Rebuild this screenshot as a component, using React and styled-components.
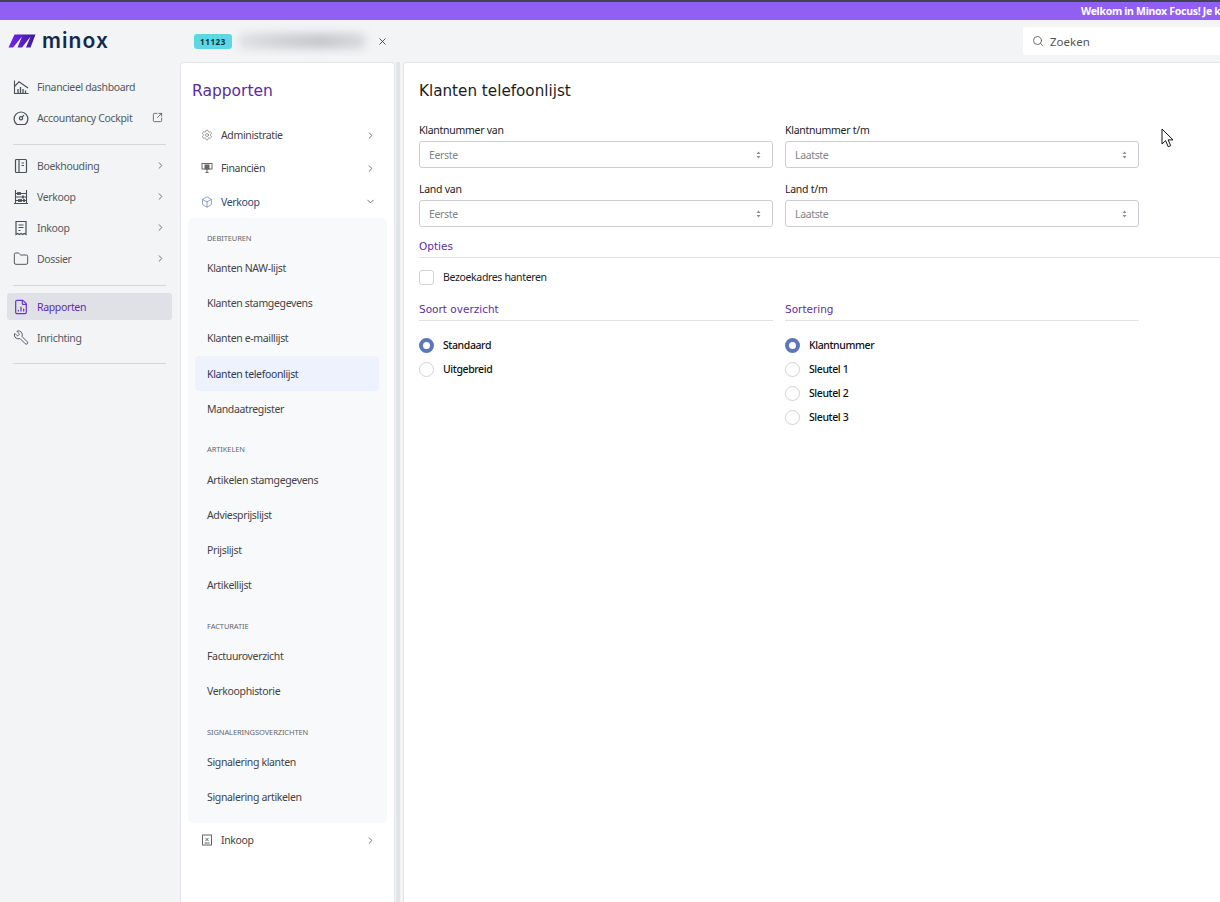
import React from "react";
import styled, { createGlobalStyle } from "styled-components";
import {
  Box,
  ChevronDown,
  ChevronRight,
  FileChartColumn,
  Folder,
  Search,
  Settings,
  SquareArrowOutUpRight,
  Wrench,
  X,
} from "lucide-react";

const GlobalStyle = createGlobalStyle`
  html, body {
    margin: 0;
    padding: 0;
    height: 100%;
    overflow: hidden;
    background: #f2f4f6;
  }
  #root { height: 100%; }
  * { box-sizing: border-box; }
  body {
    font-family: "Noto Sans", "Open Sans", sans-serif;
    color: #333;
  }
`;

const Page = styled.div`
  position: relative;
  display: flex;
  flex-direction: column;
  height: 902px;
  overflow: hidden;
`;

const Banner = styled.div`
  height: 20px;
  flex: none;
  border-top: 2px solid #45414f;
  background: #9160f2;
  color: #fff;
  font-size: 10.5px;
  font-weight: 700;
  letter-spacing: -0.3px;
  line-height: 18px;
  padding-left: 1081px;
  white-space: nowrap;
  overflow: hidden;
`;

const Header = styled.header`
  height: 42px;
  flex: none;
  display: flex;
  align-items: center;
  overflow: hidden;
`;

const LogoWrap = styled.div`
  width: 194px;
  flex: none;
  display: flex;
  align-items: center;
  gap: 6px;
  padding-left: 8px;
`;

const LogoText = styled.span`
  font-family: Inter, sans-serif;
  font-size: 21px;
  font-weight: 600;
  letter-spacing: 1.1px;
  color: #14294f;
  line-height: 24px;
`;

const Badge = styled.span`
  width: 38px;
  height: 15px;
  flex: none;
  border-radius: 3px;
  background: #5dd6e6;
  color: #12303a;
  font-size: 8px;
  font-weight: 700;
  letter-spacing: 0.6px;
  line-height: 15px;
  text-align: center;
`;

const BlurredName = styled.div`
  width: 128px;
  height: 16px;
  margin: 0 11px 0 6px;
  border-radius: 7px;
  background: linear-gradient(90deg, #e0e2e4, #d2d3d6 30%, #c6c8cb 65%, #d9dadd);
  filter: blur(4px);
`;

const CloseBtn = styled.span`
  display: flex;
  color: #333;
`;

const SearchBox = styled.div`
  margin-left: auto;
  width: 197px;
  height: 28px;
  flex: none;
  display: flex;
  align-items: center;
  gap: 6px;
  padding-left: 9px;
  background: #fff;
  border-radius: 3px 0 0 3px;
  font-size: 11.5px;
  color: #555;
`;

const Body = styled.div`
  flex: 1;
  display: flex;
  min-height: 0;
  letter-spacing: -0.35px;
`;

const Sidebar = styled.nav`
  width: 180px;
  flex: none;
  display: flex;
  flex-direction: column;
  padding: 9px 8px 0 7px;
`;

const SideItem = styled.div`
  height: ${(p) => (p.$active ? "27px" : "31px")};
  margin: ${(p) => (p.$active ? "2px 0" : "0")};
  flex: none;
  display: flex;
  align-items: center;
  padding: 0 6px 0 6px;
  border-radius: 3px;
  font-size: 10.5px;
  color: ${(p) => (p.$active ? "#5b2bb5" : "#555a60")};
  background: ${(p) => (p.$active ? "#dfe1e6" : "transparent")};
`;

const SideIcon = styled.span`
  width: 16px;
  height: 16px;
  flex: none;
  display: flex;
  align-items: center;
  justify-content: center;
  margin-right: 8px;
  color: ${(p) => (p.$active ? "#6a35c9" : "#4a4f55")};
  transform: ${(p) => (p.$flip ? "scaleX(-1)" : "none")};
`;

const SideLabel = styled.span`
  flex: 1;
  white-space: nowrap;
`;

const SideDivider = styled.hr`
  height: 1px;
  flex: none;
  border: 0;
  margin: 11px 6px 5px;
  background: #d3d6da;

  &:last-child {
    margin-top: 10px;
  }
`;

const Arrow = styled.span`
  display: flex;
  color: #666;
  margin-right: ${(p) => p.$shift || 0}px;
`;

const Panel = styled.aside`
  width: 215px;
  flex: none;
  background: #fff;
  border: 1px solid #e3e5e8;
  border-bottom: 0;
  border-radius: 4px 4px 0 0;
  padding: 0 7px 0 7px;
`;

const PanelTitle = styled.h2`
  margin: 0;
  padding: 18px 0 0 4px;
  height: 56px;
  font-family: "DejaVu Sans", sans-serif;
  font-size: 15.5px;
  font-weight: 400;
  letter-spacing: 0;
  line-height: 20px;
  color: #5b2a9d;
`;

const PanelRow = styled.div`
  height: ${(p) => p.$h || 33}px;
  display: flex;
  align-items: center;
  padding: 0 11px 0 13px;
  font-size: 10.5px;
  color: ${(p) => (p.$open ? "#33476e" : "#444")};
`;

const PanelIcon = styled.span`
  width: 13px;
  display: flex;
  margin-right: 7px;
  color: ${(p) => (p.$open ? "#5a6f9c" : "#666")};
`;

const PanelLabel = styled.span`
  flex: 1;
`;

const SubBox = styled.div`
  height: 605px;
  background: #f8f9fb;
  border-radius: 5px;
  padding: 10px 8px 0 7px;
`;

const SubHeading = styled.div`
  height: 20px;
  margin: ${(p) => p.$mt || 0}px 0 2.5px;
  padding-left: 12px;
  font-size: 7.5px;
  letter-spacing: -0.1px;
  line-height: 20px;
  text-transform: uppercase;
  color: #666;
`;

const SubItem = styled.div`
  height: 35.2px;
  display: flex;
  align-items: center;
  padding-left: 12px;
  border-radius: 4px;
  font-size: 10.5px;
  color: ${(p) => (p.$active ? "#2d3a5c" : "#444")};
  background: ${(p) => (p.$active ? "#eef2fc" : "transparent")};
`;

const Splitter = styled.div`
  width: 8px;
  flex: none;
  background: linear-gradient(90deg, #f2f4f6 0 1px, #e2e5e8 1px 5px, #f2f4f6 5px);
`;

const Main = styled.main`
  flex: 1;
  min-width: 0;
  background: #fff;
  border: 1px solid #e3e5e8;
  border-right: 0;
  border-bottom: 0;
  border-radius: 4px 0 0 0;
  padding: 18px 0 0 15px;
  overflow: hidden;
`;

const Title = styled.h1`
  margin: 0 0 23px;
  font-family: "DejaVu Sans", sans-serif;
  font-size: 15.2px;
  font-weight: 400;
  letter-spacing: 0;
  line-height: 20px;
  color: #1c1c1c;
`;

const FieldGrid = styled.div`
  display: grid;
  grid-template-columns: 354px 354px;
  column-gap: 12px;
  row-gap: 15px;
`;

const Field = styled.div`
  display: flex;
  flex-direction: column;
`;

const FieldLabel = styled.label`
  font-size: 10.5px;
  letter-spacing: -0.27px;
  line-height: 12px;
  height: 17px;
  color: #222;
`;

const Select = styled.div`
  height: 27px;
  display: flex;
  align-items: center;
  justify-content: space-between;
  padding: 0 11px 0 9px;
  border: 1px solid #c9ccd1;
  border-radius: 3px;
  font-size: 10.5px;
  color: #808488;
`;

const SectionTitle = styled.h3`
  margin: 0;
  height: 19px;
  font-family: "DejaVu Sans", sans-serif;
  font-size: 10.5px;
  font-weight: 400;
  letter-spacing: 0;
  line-height: 14px;
  color: #5f2f9f;
  border-bottom: 1px solid #dfe1e5;
`;

const Options = styled.div`
  margin-top: ${(p) => p.$mt || 0}px;
`;

const CheckRow = styled.label`
  height: 15px;
  display: flex;
  align-items: center;
  gap: 9px;
  font-size: 10.5px;
  color: #222;
`;

const CheckText = styled.span`
  padding-bottom: 2px;
`;

const CheckBox = styled.span`
  width: 15px;
  height: 15px;
  flex: none;
  border: 1px solid #cfd2d6;
  border-radius: 3px;
  background: #fff;
`;

const RadioRow = styled.label`
  height: 24px;
  display: flex;
  align-items: center;
  gap: 9px;
  font-size: 10.5px;
  font-weight: 500;
  letter-spacing: -0.4px;
  color: #111;
`;

const RadioDot = styled.span`
  width: 15px;
  height: 15px;
  flex: none;
  border-radius: 50%;
  background: #fff;
  border: ${(p) => (p.$on ? "4.5px solid #5b76bd" : "1px solid #cfd2d6")};
`;

const Pointer = styled.svg`
  position: absolute;
  left: 1161px;
  top: 128px;
`;

const LogoMark = () => (
  <svg width="28" height="14" viewBox="0 0 28 14">
    <defs>
      <linearGradient id="logoGrad" x1="0" x2="28" y1="0" y2="0" gradientUnits="userSpaceOnUse">
        <stop offset="0" stopColor="#7a22f0" />
        <stop offset="1" stopColor="#3a1a96" />
      </linearGradient>
    </defs>
    <path
      d="M0.5 13.5 6.5 0.5H27.5L22.5 13.5H18L22.6 2.5 14 13.5H9.5L14 2.5 5 13.5Z"
      fill="url(#logoGrad)"
    />
  </svg>
);

const DashIcon = () => (
  <svg width="16" height="16" viewBox="0 0 16 16" fill="none" stroke="currentColor" strokeWidth="1.1">
    <path d="M1.5 1.5v13h14" />
    <path d="M1.5 7.5 6 2.8l9 6.2" />
    <path d="M5 14v-4M7.5 14V8M10 14v-4M12.5 14v-2.5" strokeWidth="1.3" />
  </svg>
);

const CockpitIcon = () => (
  <svg width="16" height="16" viewBox="0 0 16 16" fill="none" stroke="currentColor" strokeWidth="1.2">
    <path d="M4 14.5h8a6.9 6.9 0 1 0-8 0Z" />
    <circle cx="8" cy="8.2" r="1.6" />
    <path d="m9 7.2 2-2" />
  </svg>
);

const BookIcon = () => (
  <svg width="16" height="16" viewBox="0 0 16 16" fill="none" stroke="currentColor" strokeWidth="1.2">
    <rect x="2.5" y="1.5" width="11" height="13" rx="1" />
    <path d="M6 1.5v13M8.5 5H11M8.5 7.5H11" />
  </svg>
);

const AbacusIcon = () => (
  <svg width="16" height="16" viewBox="0 0 16 16" fill="none" stroke="currentColor" strokeWidth="1.1">
    <path d="M2.5 1v13M13.5 1v13M1 14.5h14M2.5 4.5h11M2.5 8h11M2.5 11.5h11" />
    <path d="M5 3v3M7 3v3M10 6.5v3M6 10v3M8 10v3M11 10v3" strokeWidth="1.7" />
  </svg>
);

const ReceiptIcon = () => (
  <svg width="16" height="16" viewBox="0 0 16 16" fill="none" stroke="currentColor" strokeWidth="1.2">
    <path d="M3 1.5h10v13l-1.7-1-1.6 1-1.7-1-1.7 1-1.6-1-1.7 1Z" />
    <path d="M5.5 5h5M5.5 7.5h5M5.5 10.5h2" />
  </svg>
);

const TrophyIcon = () => (
  <svg width="12" height="12" viewBox="0 0 12 12" fill="none" stroke="currentColor" strokeWidth="1">
    <rect x="1" y="1.5" width="10" height="5.5" />
    <path d="M6 7v3.5M4.5 10.5h3" />
    <rect x="4" y="3" width="4" height="4" fill="currentColor" />
  </svg>
);

const InvoiceIcon = () => (
  <svg width="12" height="12" viewBox="0 0 12 12" fill="none" stroke="currentColor" strokeWidth="1">
    <rect x="1.5" y="1" width="9" height="10" />
    <path d="m4.5 4 3 3M7.5 4l-3 3M3.5 9h5" />
  </svg>
);

const SelectCarets = () => (
  <svg width="5" height="8" viewBox="0 0 5 8" fill="#8a8d91">
    <path d="M2.5 0.5 4.5 3H0.5ZM2.5 7.5 0.5 5h4Z" />
  </svg>
);

const sideGroups = [
  [
    { label: "Financieel dashboard", icon: <DashIcon /> },
    { label: "Accountancy Cockpit", icon: <CockpitIcon />, external: true },
  ],
  [
    { label: "Boekhouding", icon: <BookIcon />, arrow: true },
    { label: "Verkoop", icon: <AbacusIcon />, arrow: true },
    { label: "Inkoop", icon: <ReceiptIcon />, arrow: true },
    { label: "Dossier", icon: <Folder size={16} strokeWidth={1.4} />, arrow: true },
  ],
  [
    { label: "Rapporten", icon: <FileChartColumn size={16} strokeWidth={1.8} />, active: true },
    { label: "Inrichting", icon: <Wrench size={17} strokeWidth={1.4} />, flip: true },
  ],
];

const reportGroups = [
  { title: "Debiteuren", items: ["Klanten NAW-lijst", "Klanten stamgegevens", "Klanten e-maillijst", "Klanten telefoonlijst", "Mandaatregister"] },
  { title: "Artikelen", mt: 13, items: ["Artikelen stamgegevens", "Adviesprijslijst", "Prijslijst", "Artikellijst"] },
  { title: "Facturatie", mt: 13, items: ["Factuuroverzicht", "Verkoophistorie"] },
  { title: "Signaleringsoverzichten", mt: 13, items: ["Signalering klanten", "Signalering artikelen"] },
];

const fields = [
  { label: "Klantnummer van", value: "Eerste" },
  { label: "Klantnummer t/m", value: "Laatste" },
  { label: "Land van", value: "Eerste" },
  { label: "Land t/m", value: "Laatste" },
];

const radioGroups = [
  { title: "Soort overzicht", options: ["Standaard", "Uitgebreid"] },
  { title: "Sortering", options: ["Klantnummer", "Sleutel 1", "Sleutel 2", "Sleutel 3"] },
];

export default function App() {
  return (
    <Page>
      <GlobalStyle />
      <Banner>Welkom in Minox Focus! Je k</Banner>
      <Header>
        <LogoWrap>
          <LogoMark />
          <LogoText>minox</LogoText>
        </LogoWrap>
        <Badge>11123</Badge>
        <BlurredName />
        <CloseBtn>
          <X size={11} strokeWidth={1.8} />
        </CloseBtn>
        <SearchBox>
          <Search size={12} strokeWidth={1.7} />
          Zoeken
        </SearchBox>
      </Header>
      <Body>
        <Sidebar>
          {sideGroups.map((group, i) => (
            <React.Fragment key={i}>
              {group.map((item) => (
                <SideItem key={item.label} $active={item.active}>
                  <SideIcon $active={item.active} $flip={item.flip}>{item.icon}</SideIcon>
                  <SideLabel>{item.label}</SideLabel>
                  {item.arrow && (
                    <Arrow>
                      <ChevronRight size={11} />
                    </Arrow>
                  )}
                  {item.external && (
                    <Arrow $shift={3}>
                      <SquareArrowOutUpRight size={11} />
                    </Arrow>
                  )}
                </SideItem>
              ))}
              <SideDivider />
            </React.Fragment>
          ))}
        </Sidebar>
        <Panel>
          <PanelTitle>Rapporten</PanelTitle>
          <PanelRow $h={32}>
            <PanelIcon>
              <Settings size={12} strokeWidth={1.2} />
            </PanelIcon>
            <PanelLabel>Administratie</PanelLabel>
            <Arrow>
              <ChevronRight size={11} />
            </Arrow>
          </PanelRow>
          <PanelRow $h={34}>
            <PanelIcon>
              <TrophyIcon />
            </PanelIcon>
            <PanelLabel>Financiën</PanelLabel>
            <Arrow>
              <ChevronRight size={11} />
            </Arrow>
          </PanelRow>
          <PanelRow $h={33} $open>
            <PanelIcon $open>
              <Box size={12} strokeWidth={1.3} />
            </PanelIcon>
            <PanelLabel>Verkoop</PanelLabel>
            <Arrow>
              <ChevronDown size={11} />
            </Arrow>
          </PanelRow>
          <SubBox>
            {reportGroups.map((group) => (
              <React.Fragment key={group.title}>
                <SubHeading $mt={group.mt}>{group.title}</SubHeading>
                {group.items.map((item) => (
                  <SubItem key={item} $active={item === "Klanten telefoonlijst"}>
                    {item}
                  </SubItem>
                ))}
              </React.Fragment>
            ))}
          </SubBox>
          <PanelRow $h={34}>
            <PanelIcon>
              <InvoiceIcon />
            </PanelIcon>
            <PanelLabel>Inkoop</PanelLabel>
            <Arrow>
              <ChevronRight size={11} />
            </Arrow>
          </PanelRow>
        </Panel>
        <Splitter />
        <Main>
          <Title>Klanten telefoonlijst</Title>
          <FieldGrid>
            {fields.map((field) => (
              <Field key={field.label}>
                <FieldLabel>{field.label}</FieldLabel>
                <Select>
                  {field.value}
                  <SelectCarets />
                </Select>
              </Field>
            ))}
          </FieldGrid>
          <Options $mt={12}>
            <SectionTitle>Opties</SectionTitle>
            <Options $mt={12}>
              <CheckRow>
                <CheckBox />
                <CheckText>Bezoekadres hanteren</CheckText>
              </CheckRow>
            </Options>
          </Options>
          <FieldGrid>
            {radioGroups.map((group) => (
              <Options key={group.title} $mt={17}>
                <SectionTitle>{group.title}</SectionTitle>
                <Options $mt={12}>
                  {group.options.map((option, i) => (
                    <RadioRow key={option}>
                      <RadioDot $on={i === 0} />
                      {option}
                    </RadioRow>
                  ))}
                </Options>
              </Options>
            ))}
          </FieldGrid>
        </Main>
      </Body>
      <Pointer width="13" height="20" viewBox="0 0 13 20">
        <path d="M1 1v15l3.6-3.3 2.6 6 2.5-1-2.6-5.8H12Z" fill="#fff" stroke="#111" strokeWidth="1" />
      </Pointer>
    </Page>
  );
}
